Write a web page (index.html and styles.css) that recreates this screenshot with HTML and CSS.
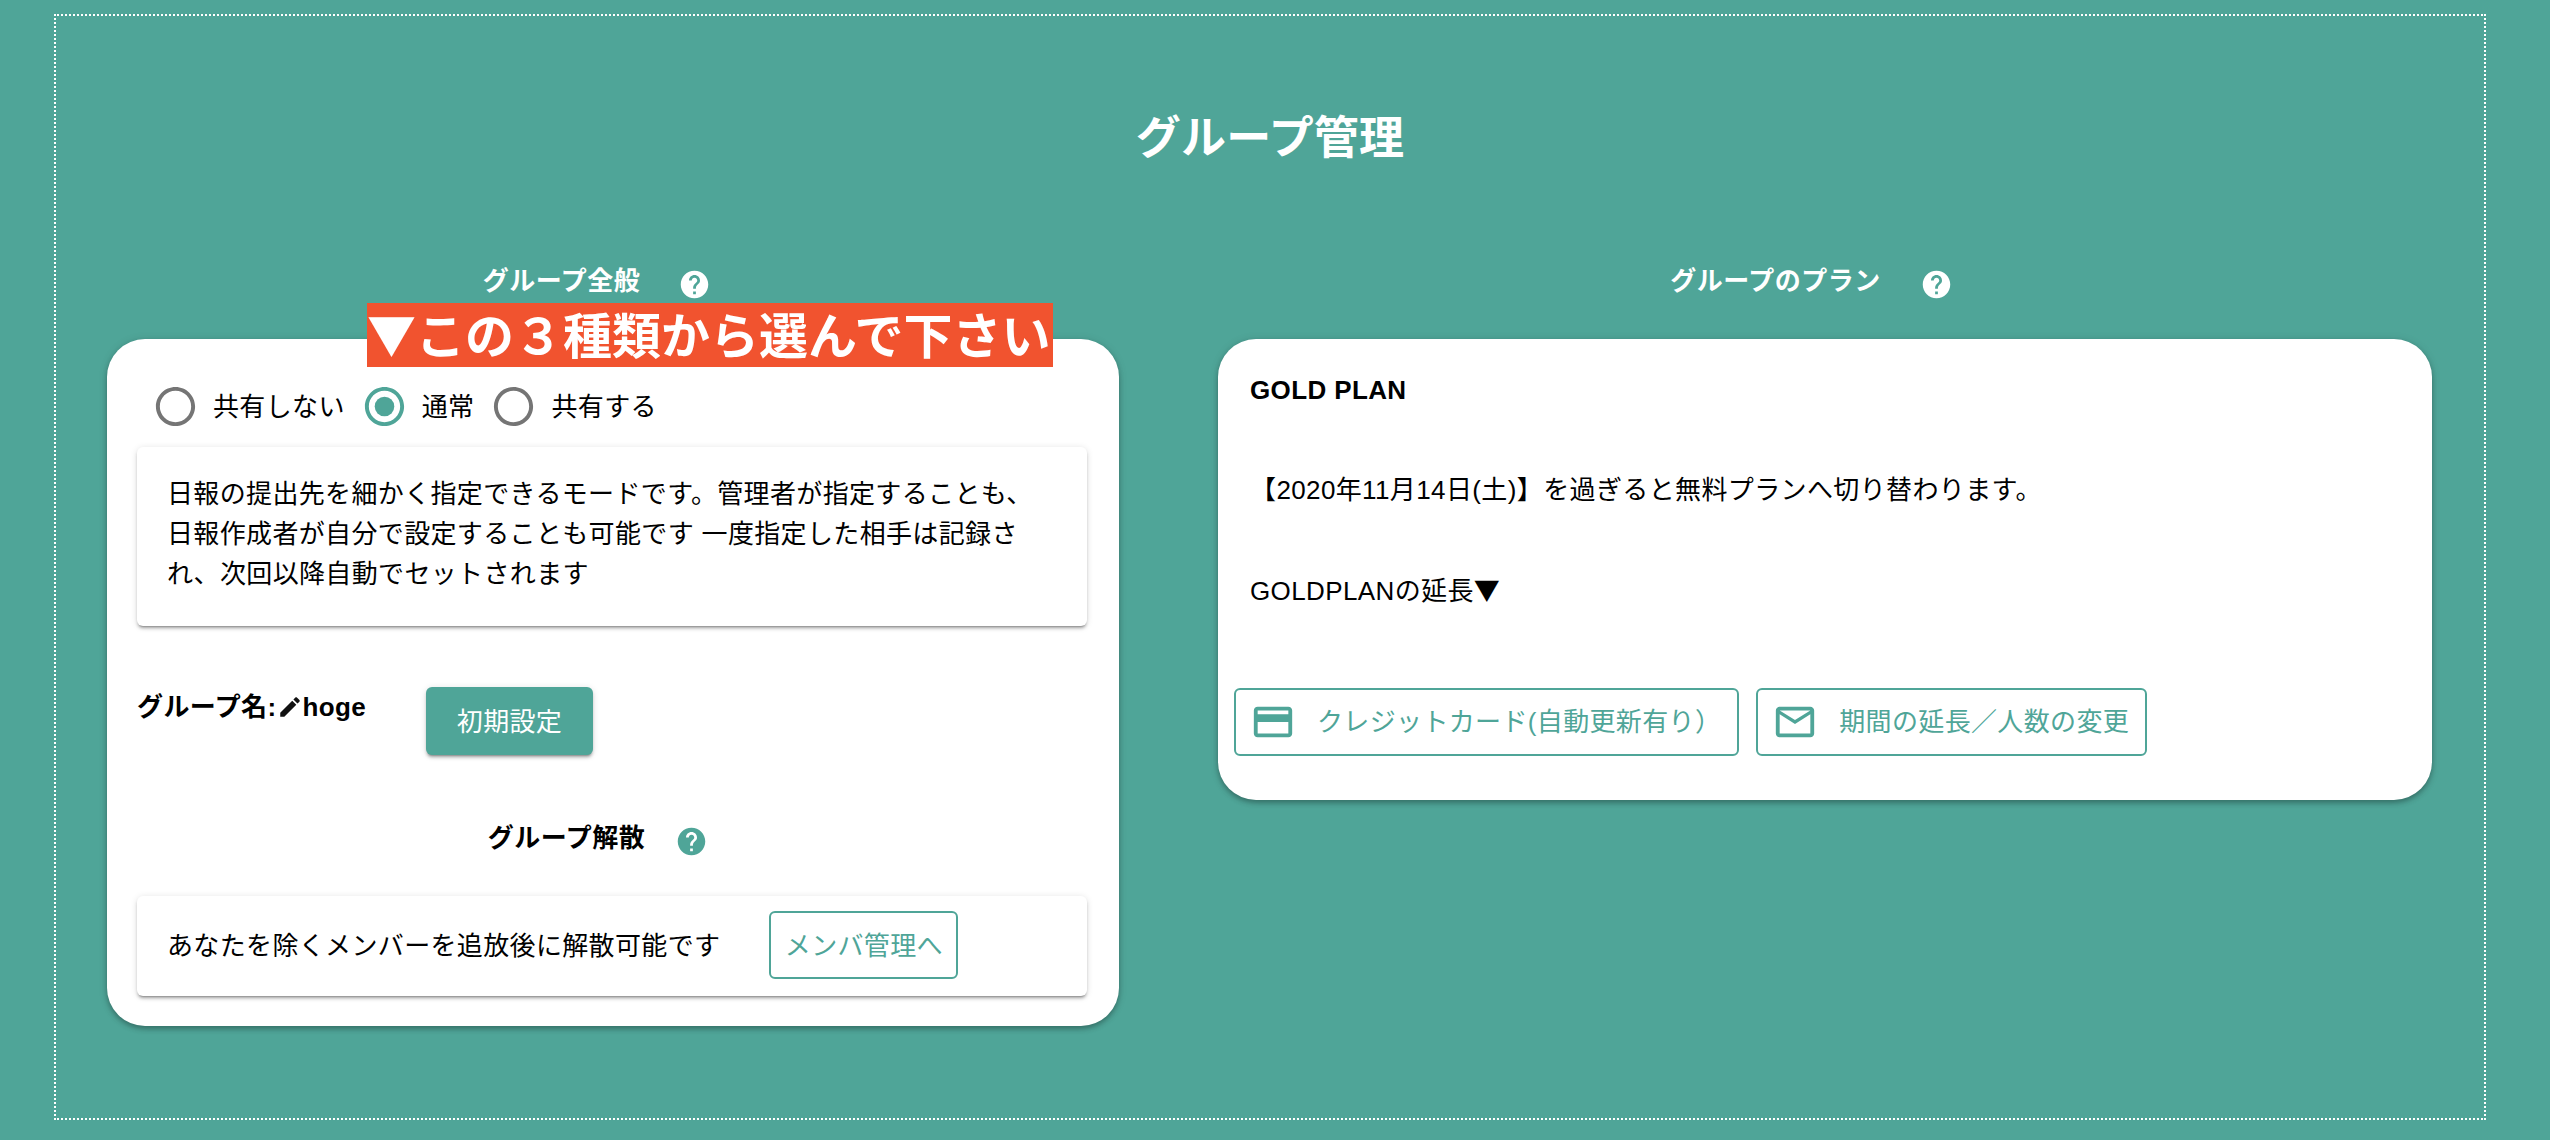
FILE: index.html
```html
<!doctype html>
<html lang="ja">
<head>
    <meta charset="UTF-8">
    <title>グループ管理</title>
    <link rel="stylesheet" href="styles.css">
</head>
<body>
    <svg class="sprite" xmlns="http://www.w3.org/2000/svg">
        <symbol id="i-help" viewBox="0 0 24 24"><path d="M12 2C6.48 2 2 6.48 2 12s4.48 10 10 10 10-4.48 10-10S17.52 2 12 2zm1 17h-2v-2h2v2zm2.07-7.75l-.9.92C13.45 12.9 13 13.5 13 15h-2v-.5c0-1.1.45-2.1 1.17-2.83l1.24-1.26c.37-.36.59-.86.59-1.41 0-1.1-.9-2-2-2s-2 .9-2 2H8c0-2.21 1.79-4 4-4s4 1.79 4 4c0 .88-.36 1.68-.93 2.25z"/></symbol>
        <symbol id="i-radio" viewBox="0 0 24 24"><path d="M12 2C6.48 2 2 6.48 2 12s4.48 10 10 10 10-4.48 10-10S17.52 2 12 2zm0 18c-4.42 0-8-3.58-8-8s3.58-8 8-8 8 3.58 8 8-3.58 8-8 8z"/></symbol>
        <symbol id="i-radio-on" viewBox="0 0 24 24"><path d="M12 2C6.48 2 2 6.48 2 12s4.48 10 10 10 10-4.48 10-10S17.52 2 12 2zm0 18c-4.42 0-8-3.58-8-8s3.58-8 8-8 8 3.58 8 8-3.58 8-8 8z"/><circle cx="12" cy="12" r="5"/></symbol>
        <symbol id="i-edit" viewBox="0 0 24 24"><path d="M3 17.25V21h3.75L17.81 9.94l-3.75-3.75L3 17.25zM20.71 7.04c.39-.39.39-1.02 0-1.41l-2.34-2.34c-.39-.39-1.02-.39-1.41 0l-1.83 1.83 3.75 3.75 1.83-1.83z"/></symbol>
        <symbol id="i-card" viewBox="0 0 24 24"><path d="M20 4H4c-1.11 0-1.99.89-1.99 2L2 18c0 1.11.89 2 2 2h16c1.11 0 2-.89 2-2V6c0-1.11-.89-2-2-2zm0 14H4v-6h16v6zm0-10H4V6h16v2z"/></symbol>
        <symbol id="i-mail" viewBox="0 0 24 24"><path d="M20 4H4c-1.1 0-1.99.9-1.99 2L2 18c0 1.1.9 2 2 2h16c1.1 0 2-.9 2-2V6c0-1.1-.9-2-2-2zm0 14H4V8l8 5 8-5v10zm-8-7L4 6h16l-8 5z"/></symbol>
    </svg>

    <main class="frame">
        <h1 class="page-title">グループ管理</h1>

        <div class="columns">
            <section class="column">
                <div class="section-head section-head-left">
                    <h2>グループ全般</h2>
                    <svg class="help-icon"><use href="#i-help"/></svg>
                </div>
                <div class="notice"><span class="cjk-mark">▼</span>この３種類から選んで下さい</div>

                <div class="card card-left">
                    <div class="radio-row">
                        <label class="radio"><svg class="radio-icon"><use href="#i-radio"/></svg>共有しない</label>
                        <label class="radio radio-checked"><svg class="radio-icon"><use href="#i-radio-on"/></svg>通常</label>
                        <label class="radio"><svg class="radio-icon"><use href="#i-radio"/></svg>共有する</label>
                    </div>

                    <div class="paper paper-info">
                        日報の提出先を細かく指定できるモードです。管理者が指定することも、日報作成者が自分で設定することも可能です 一度指定した相手は記録され、次回以降自動でセットされます
                    </div>

                    <div class="name-row">
                        <div class="group-name">グループ名:<svg class="edit-icon"><use href="#i-edit"/></svg>hoge</div>
                        <button class="btn btn-filled"><span class="btn-label">初期設定</span></button>
                    </div>

                    <div class="section-head section-head-dissolve">
                        <h2>グループ解散</h2>
                        <svg class="help-icon help-icon-teal"><use href="#i-help"/></svg>
                    </div>

                    <div class="paper paper-dissolve">
                        <span>あなたを除くメンバーを追放後に解散可能です</span>
                        <button class="btn btn-outline btn-members"><span class="btn-label">メンバ管理へ</span></button>
                    </div>
                </div>
            </section>

            <section class="column">
                <div class="section-head section-head-right">
                    <h2>グループのプラン</h2>
                    <svg class="help-icon"><use href="#i-help"/></svg>
                </div>

                <div class="card card-right">
                    <p class="plan-name">GOLD PLAN</p>
                    <p class="plan-text">【2020年11月14日(土)】を過ぎると無料プランへ切り替わります。</p>
                    <p class="plan-text plan-extend">GOLDPLANの延長<span class="cjk-mark">▼</span></p>
                    <div class="plan-buttons">
                        <button class="btn btn-outline btn-icon"><svg class="btn-svg"><use href="#i-card"/></svg><span class="btn-label">クレジットカード(自動更新有り）</span></button>
                        <button class="btn btn-outline btn-icon"><svg class="btn-svg"><use href="#i-mail"/></svg><span class="btn-label">期間の延長／人数の変更</span></button>
                    </div>
                </div>
            </section>
        </div>
    </main>
</body>
</html>
```

FILE: styles.css
```css
* {
    box-sizing: border-box;
}
html, body {
    margin: 0;
    height: 1140px;
    background-color: #4fa598;
    overflow: hidden;
}
body {
    padding: 14px 64px 0 54px;
    font-family: "Liberation Sans", "Noto Sans CJK JP", sans-serif;
    font-size: 26px;
    line-height: 40px;
    letter-spacing: 0.35px;
    color: #000;
}
.sprite {
    display: none;
}
.cjk-mark {
    font-family: "Noto Sans CJK JP", sans-serif;
}

/* 外枠 */
.frame {
    height: 1106px;
    padding: 92px 0 0 51px;
    border: 2px dotted #fff;
}
.page-title {
    margin: 1px 51px -1px 0;
    font-size: 45px;
    line-height: 60px;
    font-weight: 700;
    letter-spacing: 0.2px;
    text-align: center;
    color: #fff;
}
.columns {
    display: grid;
    grid-template-columns: 1012px 1214px;
    column-gap: 99px;
    margin-top: 93px;
}
.column {
    position: relative;
}

/* 見出し */
.section-head {
    display: flex;
    justify-content: center;
    align-items: center;
    height: 40px;
    margin-bottom: 38px;
    color: #fff;
}
.section-head h2 {
    margin: 0;
    font-size: 26px;
    font-weight: 700;
    letter-spacing: 0.5px;
}
.section-head-left {
    gap: 38px;
    padding-right: 32px;
}
.section-head-right {
    gap: 39px;
    padding-right: 27px;
}
.section-head-dissolve {
    gap: 30px;
    margin-top: 63px;
    padding-right: 28px;
    color: #000;
}
.help-icon {
    flex: none;
    width: 33px;
    height: 33px;
    margin-top: 6px;
    fill: #fff;
}
.help-icon-teal {
    fill: #4fa598;
}

/* 注釈の帯：カードの上に重なる */
.notice {
    position: absolute;
    left: 260px;
    top: 42px;
    z-index: 1;
    width: 686px;
    height: 64px;
    background-color: #f1532f;
    color: #fff;
    font-size: 49px;
    font-weight: 700;
    line-height: 60px;
    letter-spacing: 0;
    white-space: nowrap;
}

/* カード */
.card {
    background-color: #fff;
    border-radius: 38px;
    box-shadow: 0 3px 5px rgba(0, 0, 0, 0.25), 0 1px 10px rgba(0, 0, 0, 0.12);
}
.card-left {
    height: 687px;
    padding: 44px 32px 0 30px;
}
.card-right {
    height: 461px;
    padding: 31px 0 0 16px;
}
.paper {
    background-color: #fff;
    border-radius: 6px;
    box-shadow: 0 3px 2px -2px rgba(0, 0, 0, 0.3), 0 3px 3px rgba(0, 0, 0, 0.16), 0 1px 7px rgba(0, 0, 0, 0.12);
}
.paper-info {
    height: 179px;
    margin-top: 17px;
    padding: 27px 30px 0;
}
.paper-dissolve {
    display: flex;
    align-items: center;
    gap: 48px;
    height: 100px;
    padding-left: 30px;
}

/* ラジオ */
.radio-row {
    display: flex;
    align-items: center;
    height: 47px;
    padding-left: 15px;
}
.radio {
    display: flex;
    align-items: center;
    gap: 14px;
    margin-right: 16px;
    letter-spacing: 0.35px;
    white-space: nowrap;
}
.radio-icon {
    flex: none;
    width: 47px;
    height: 47px;
    fill: #757575;
}
.radio-checked .radio-icon {
    fill: #4fa598;
}

/* グループ名 */
.name-row {
    display: flex;
    align-items: flex-start;
    gap: 61px;
    margin-top: 61px;
}
.group-name {
    display: flex;
    align-items: center;
    width: 228px;
    font-weight: 700;
    letter-spacing: 0.4px;
    white-space: nowrap;
}
.edit-icon {
    flex: none;
    width: 26px;
    height: 26px;
    fill: #111;
}

/* ボタン */
.btn {
    display: inline-flex;
    align-items: center;
    justify-content: center;
    height: 68px;
    padding: 0;
    border-radius: 6px;
    font-family: inherit;
    font-size: 26px;
    letter-spacing: 0.35px;
    white-space: nowrap;
    cursor: pointer;
}
.btn-label {
    margin-top: -4px;
}
.btn-filled {
    width: 167px;
    border: none;
    background-color: #4fa598;
    color: #fff;
    box-shadow: 0 3px 2px -2px rgba(0, 0, 0, 0.3), 0 3px 3px rgba(0, 0, 0, 0.16), 0 1px 7px rgba(0, 0, 0, 0.12);
}
.btn-outline {
    border: 2px solid #4fa598;
    background-color: #fff;
    color: #4fa598;
}
.btn-members {
    width: 189px;
    margin-left: 1px;
    margin-top: -2px;
}
.btn-icon {
    gap: 21px;
    padding: 0 16px 0 14px;
}
.btn-icon .btn-label {
    margin-top: -6px;
}
.btn-svg {
    flex: none;
    width: 46px;
    height: 46px;
    fill: #4fa598;
}

/* プラン */
.plan-name, .plan-text {
    margin: 0 0 0 16px;
    letter-spacing: 0.38px;
}
.plan-name {
    font-weight: 700;
}
.plan-text {
    margin-top: 60px;
}
.plan-text.plan-extend {
    margin-top: 59px;
}
.plan-buttons {
    display: flex;
    gap: 17px;
    margin-top: 77px;
}
```
